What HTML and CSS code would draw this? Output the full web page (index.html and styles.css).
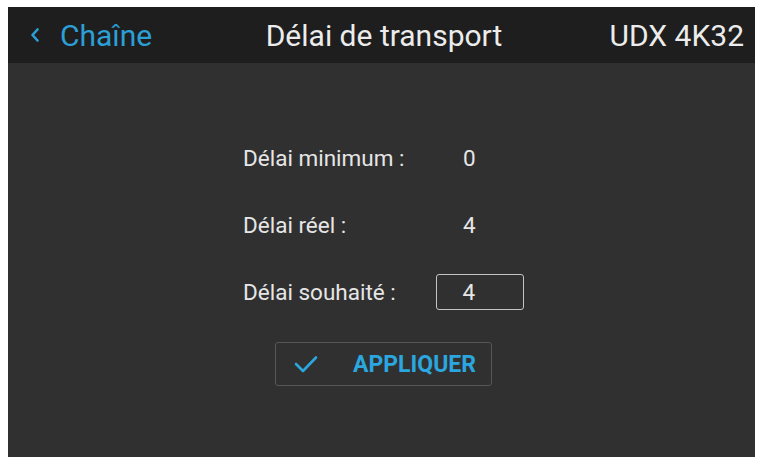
FILE: index.html
```html
<!DOCTYPE html>
<html lang="fr">
<head>
<meta charset="utf-8">
<title>Délai de transport</title>
<link rel="stylesheet" href="styles.css">
</head>
<body>
<div class="screen">
  <header class="topbar">
    <div class="back">
      <svg class="chev" width="10" height="14" viewBox="0 0 10 14"><path d="M7.5 1.5 L2.5 7 L7.5 12.5" fill="none" stroke="currentColor" stroke-width="2.6" stroke-linecap="round" stroke-linejoin="round"/></svg>
      <span>Chaîne</span>
    </div>
    <div class="title">Délai de transport</div>
    <div class="device">UDX 4K32</div>
  </header>
  <main class="content">
    <div class="form">
      <div class="label">Délai minimum :</div>
      <div class="value">0</div>
      <div class="label">Délai réel :</div>
      <div class="value">4</div>
      <div class="label">Délai souhaité :</div>
      <div class="value input">4</div>
    </div>
    <button class="apply">
      <svg class="check" width="24" height="18" viewBox="0 0 24 18"><path d="M2 9 L9 16 L22 2.5" fill="none" stroke="currentColor" stroke-width="2.6" stroke-linecap="round" stroke-linejoin="round"/></svg>
      <span>APPLIQUER</span>
    </button>
  </main>
</div>
</body>
</html>
```
FILE: styles.css
```css
html, body {
  margin: 0;
  padding: 0;
  background: #ffffff;
}
body {
  font-family: Roboto, "Liberation Sans", sans-serif;
}
.screen {
  margin: 7px 7px 0 8px;
  height: 450px;
  background: #303030;
  display: flex;
  flex-direction: column;
  overflow: hidden;
}
.topbar {
  height: 56px;
  background: #1e1e1e;
  display: grid;
  grid-template-columns: 1fr auto 1fr;
  align-items: center;
  padding: 0 11px 0 22px;
}
.back {
  display: flex;
  align-items: center;
  gap: 20px;
  color: #2b9fd6;
  font-size: 30px;
}
.chev {
  display: block;
}
.title {
  color: #ececec;
  font-size: 30px;
  text-align: center;
  padding-right: 6px;
}
.device {
  color: #ececec;
  font-size: 30px;
  text-align: right;
}
.content {
  flex: 1;
  display: flex;
  flex-direction: column;
  align-items: center;
  padding: 77px 0 0 4px;
}
.form {
  display: grid;
  grid-template-columns: 193px 88px;
  grid-auto-rows: 36px;
  row-gap: 31px;
  align-items: center;
  color: #e6e6e6;
  font-size: 22.5px;
}
.value {
  padding-left: 27px;
  box-sizing: border-box;
}
.input {
  height: 36px;
  border: 1.5px solid #c4c4c4;
  border-radius: 3px;
  display: flex;
  align-items: center;
  padding-left: 25.5px;
}
.apply {
  margin-top: 32px;
  width: 217px;
  height: 44px;
  background: transparent;
  border: 1.5px solid #565656;
  border-radius: 3px;
  display: flex;
  align-items: center;
  padding: 0 0 0 18px;
  gap: 35px;
  color: #2ba6de;
  font-family: Roboto, "Liberation Sans", sans-serif;
  font-size: 23px;
  font-weight: 700;
}
.check {
  display: block;
}
```
